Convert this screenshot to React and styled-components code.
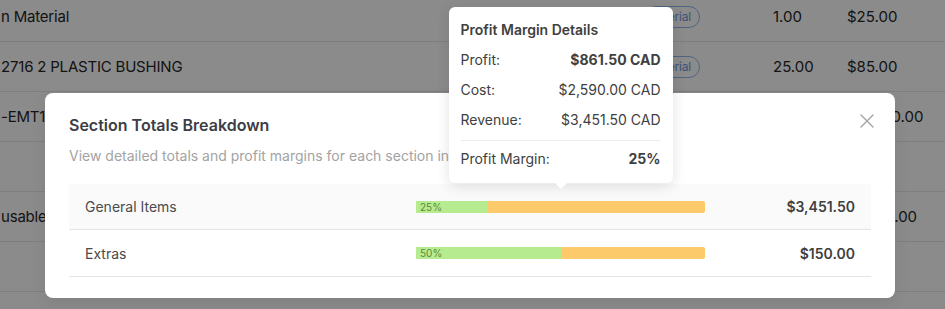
import { styled, createGlobalStyle } from 'styled-components';

const GlobalStyle = createGlobalStyle`
    html, body {
        margin: 0;
        padding: 0;
        width: 945px;
        height: 309px;
        overflow: hidden;
        background: #ffffff;
        font-family: Inter, "Noto Sans", "Liberation Sans", sans-serif;
        -webkit-font-smoothing: antialiased;
    }
`;

const bgRows = [
    { name: 'n Material', chip: true, qty: '1.00', price: '$25.00' },
    { name: '2716 2 PLASTIC BUSHING', chip: true, qty: '25.00', price: '$85.00' },
    { name: '-EMT112 3/4 EMT CONNECTOR', chip: true, qty: '10.00', price: '$11,250.00' },
    { name: '', chip: false, qty: '', price: '' },
    { name: 'usable Materials', chip: true, qty: '5.00', price: '$1,265.00' },
    { name: '', chip: false, qty: '', price: '' },
];

const sections = [
    { name: 'General Items', margin: 25, total: '$3,451.50', tip: true },
    { name: 'Extras', margin: 50, total: '$150.00' },
];

const App = () => {
    return (
        <Page>
            <GlobalStyle />
            <BgTable>
                {bgRows.map((row, i) => (
                    <BgRow key={i}>
                        <span>{row.name}</span>
                        <span>{row.chip && <Chip>Material</Chip>}</span>
                        <span>{row.qty}</span>
                        <span>{row.price}</span>
                    </BgRow>
                ))}
            </BgTable>
            <Overlay />
            <Modal>
                <ModalHeader>
                    <Title>Section Totals Breakdown</Title>
                    <CloseButton aria-label="Close">
                        <svg width="14" height="14" viewBox="0 0 14 14">
                            <path
                                d="M1 1L13 13M13 1L1 13"
                                stroke="#a3a3a3"
                                strokeWidth="1.4"
                                strokeLinecap="round"
                            />
                        </svg>
                    </CloseButton>
                </ModalHeader>
                <Subtitle>
                    View detailed totals and profit margins for each section in your estimate.
                </Subtitle>
                <SectionList>
                    {sections.map((s) => (
                        <SectionRow key={s.name} $shaded={s.tip}>
                            <SectionName>{s.name}</SectionName>
                            <BarWrap>
                                <Bar>
                                    <BarFill style={{ width: `${s.margin}%` }}>
                                        {s.margin}%
                                    </BarFill>
                                </Bar>
                                {s.tip && (
                                    <Tooltip>
                                        <TipTitle>Profit Margin Details</TipTitle>
                                        <TipRow>
                                            <span>Profit:</span>
                                            <strong>$861.50 CAD</strong>
                                        </TipRow>
                                        <TipRow>
                                            <span>Cost:</span>
                                            <span>$2,590.00 CAD</span>
                                        </TipRow>
                                        <TipRow>
                                            <span>Revenue:</span>
                                            <span>$3,451.50 CAD</span>
                                        </TipRow>
                                        <TipRow $divided>
                                            <span>Profit Margin:</span>
                                            <strong>25%</strong>
                                        </TipRow>
                                    </Tooltip>
                                )}
                            </BarWrap>
                            <Amount>{s.total}</Amount>
                        </SectionRow>
                    ))}
                </SectionList>
            </Modal>
        </Page>
    );
};

export default App;

const Page = styled.div`
    position: relative;
    width: 945px;
    height: 309px;
    overflow: hidden;
`;

const BgTable = styled.div`
    margin-top: -8px;
    display: flex;
    flex-direction: column;
`;

const BgRow = styled.div`
    display: grid;
    grid-template-columns: 645px 128px 74px 1fr;
    align-items: center;
    height: 49px;
    border-bottom: 1px solid #e8e8e8;
    font-size: 15px;
    color: #262626;
    white-space: nowrap;
    span:first-child {
        padding-left: 1px;
        letter-spacing: -0.2px;
    }
`;

const Chip = styled.span`
    display: inline-flex;
    align-items: center;
    height: 20px;
    padding: 0 8px;
    border: 1px solid #91b8f0;
    border-radius: 999px;
    font-size: 12px;
    color: #6f9be0;
`;

const Overlay = styled.div`
    position: absolute;
    inset: 0;
    background: rgba(0, 0, 0, 0.455);
`;

const Modal = styled.div`
    position: absolute;
    left: 45px;
    top: 93px;
    width: 850px;
    box-sizing: border-box;
    padding: 20px 24px 21px;
    background: #ffffff;
    border-radius: 8px;
    box-shadow: 0 6px 16px rgba(0, 0, 0, 0.08);
`;

const ModalHeader = styled.div`
    display: flex;
    align-items: center;
    justify-content: space-between;
    height: 24px;
`;

const Title = styled.h2`
    margin: 0;
    font-size: 16px;
    line-height: 24px;
    font-weight: 600;
    color: #3d3d45;
`;

const CloseButton = styled.button`
    display: flex;
    padding: 0;
    margin-right: -3px;
    margin-top: -8px;
    background: none;
    border: none;
    cursor: pointer;
`;

const Subtitle = styled.p`
    margin: 9px 0 0;
    font-size: 14px;
    line-height: 20px;
    color: #a3a3a3;
`;

const SectionList = styled.div`
    margin-top: 18px;
    display: flex;
    flex-direction: column;
`;

const SectionRow = styled.div`
    display: grid;
    grid-template-columns: 331px 289px 1fr;
    align-items: center;
    height: 45px;
    padding: 0 16px;
    border-bottom: 1px solid #e5e5e5;
    background: ${({ $shaded }) => ($shaded ? '#fafafa' : '#ffffff')};
    & + & {
        height: 46px;
    }
`;

const SectionName = styled.span`
    font-size: 14px;
    color: #4a4a4a;
`;

const BarWrap = styled.div`
    position: relative;
`;

const Bar = styled.div`
    display: flex;
    height: 12px;
    background: #fdca6b;
    border-radius: 0 2px 2px 0;
    overflow: hidden;
`;

const BarFill = styled.div`
    display: flex;
    align-items: center;
    padding-left: 4px;
    box-sizing: border-box;
    background: #b7eb8f;
    font-size: 10px;
    color: #5e8a3e;
`;

const Amount = styled.span`
    text-align: right;
    font-size: 14px;
    font-weight: 600;
    color: #404040;
`;

const Tooltip = styled.div`
    position: absolute;
    bottom: calc(100% + 18px);
    left: 50%;
    transform: translateX(-50%);
    width: 224px;
    box-sizing: border-box;
    padding: 12px 12px 13px;
    background: #ffffff;
    border-radius: 6px;
    box-shadow: 0 3px 14px rgba(0, 0, 0, 0.12);
    font-size: 14px;
    color: #404040;
    &::after {
        content: '';
        position: absolute;
        left: 50%;
        bottom: -6px;
        transform: translateX(-50%);
        border-left: 6px solid transparent;
        border-right: 6px solid transparent;
        border-top: 6px solid #ffffff;
    }
`;

const TipTitle = styled.div`
    font-weight: 600;
    line-height: 22px;
`;

const TipRow = styled.div`
    display: flex;
    justify-content: space-between;
    line-height: 22px;
    margin-top: ${({ $divided }) => ($divided ? '9px' : '8px')};
    padding-top: ${({ $divided }) => ($divided ? '7px' : '0')};
    border-top: ${({ $divided }) => ($divided ? '1px solid #ededed' : 'none')};
    strong {
        font-weight: 700;
    }
`;
